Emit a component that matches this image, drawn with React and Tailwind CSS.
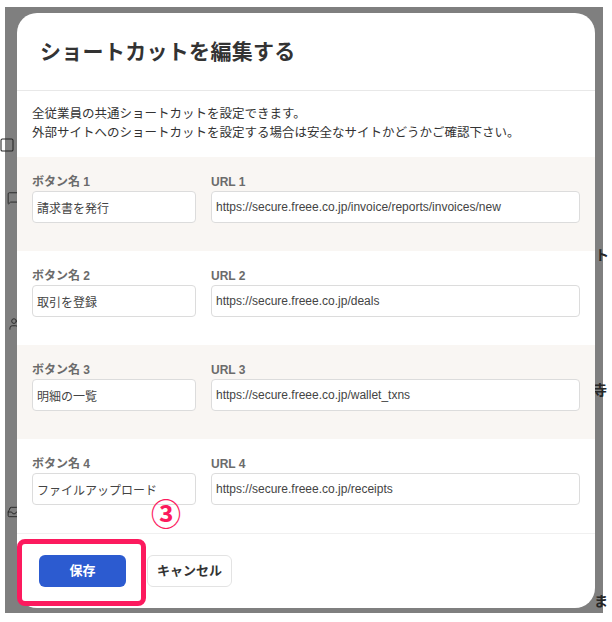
import { Square, MessageSquare, User, Inbox } from "lucide-react";

const shortcuts = [
  { name: "請求書を発行", url: "https://secure.freee.co.jp/invoice/reports/invoices/new" },
  { name: "取引を登録", url: "https://secure.freee.co.jp/deals" },
  { name: "明細の一覧", url: "https://secure.freee.co.jp/wallet_txns" },
  { name: "ファイルアップロード", url: "https://secure.freee.co.jp/receipts" },
];

function ShortcutRow({ index, item }) {
  const shaded = index % 2 === 0;
  return (
    <div className={`flex gap-[15px] px-[15px] pt-[17px] pb-[28px] ${shaded ? "bg-[#f9f6f3]" : "bg-white"}`}>
      <div className="w-[164px] shrink-0">
        <div className="text-[12px] leading-[16px] font-bold text-[#6b6b6b] mb-[1px]">ボタン名 {index + 1}</div>
        <input
          readOnly
          defaultValue={item.name}
          className="w-full h-[32px] px-[4px] text-[12px] text-[#444444] bg-white border border-[#dcdcdc] rounded-[4px] outline-none"
        />
      </div>
      <div className="flex-1">
        <div className="text-[12px] leading-[16px] font-bold text-[#6b6b6b] mb-[1px]">URL {index + 1}</div>
        <input
          readOnly
          defaultValue={item.url}
          className="w-full h-[32px] px-[4px] text-[12px] text-[#444444] bg-white border border-[#dcdcdc] rounded-[4px] outline-none"
        />
      </div>
    </div>
  );
}

export default function App() {
  return (
    <div className="w-[612px] h-[622px] bg-white relative overflow-hidden pt-[7px] pl-[5px] font-['Liberation_Sans','Noto_Sans_CJK_JP',sans-serif]">
      <div className="relative w-[598px] h-[606px] bg-[#7f7f7f] pl-[12px] pt-[6px] pr-[8px] pb-[5px]">
        {/* page behind the overlay */}
        <div className="absolute left-[-6px] top-[130px] text-[#262626]"><Square size={16} strokeWidth={1.6} /></div>
        <div className="absolute left-[2px] top-[184px] text-[#262626]"><MessageSquare size={14} strokeWidth={1.6} /></div>
        <div className="absolute left-[2px] top-[310px] text-[#262626]"><User size={14} strokeWidth={1.6} /></div>
        <div className="absolute left-[2px] top-[498px] text-[#262626]"><Inbox size={14} strokeWidth={1.6} /></div>
        <span className="absolute left-[590px] top-[238px] text-[14px] font-bold text-[#262626]">ト</span>
        <span className="absolute left-[588px] top-[373px] text-[14px] font-bold text-[#262626]">寺</span>
        <span className="absolute left-[589px] top-[584px] text-[14px] font-bold text-[#262626]">ま</span>

        <div className="relative z-10 h-full bg-white rounded-[20px] overflow-hidden flex flex-col">
          <div className="h-[78px] shrink-0 flex items-center pl-[23px] border-b border-[#e8e8e8]">
            <h1 className="text-[21px] font-bold text-[#333333] tracking-[0.3px]">ショートカットを編集する</h1>
          </div>
          <div className="px-[15px] pt-[14px] pb-[14px] text-[12.5px] leading-[19px] text-[#333333]">
            <p>全従業員の共通ショートカットを設定できます。</p>
            <p>外部サイトへのショートカットを設定する場合は安全なサイトかどうかご確認下さい。</p>
          </div>
          {shortcuts.map((item, i) => (
            <ShortcutRow key={i} index={i} item={item} />
          ))}
          <div className="border-t border-[#f0f0f0] flex gap-[21px] pl-[22px] pt-[21px]">
            <button className="w-[87px] h-[32px] rounded-[6px] bg-[#2c5bd0] text-white text-[13px] font-bold">保存</button>
            <button className="w-[85px] h-[32px] rounded-[6px] bg-white border border-[#e3e3e3] text-[#333333] text-[13px] font-bold">キャンセル</button>
          </div>
        </div>

        {/* annotation */}
        <div className="absolute z-20 left-[12px] top-[532px] w-[129px] h-[67px] border-[5px] border-[#fc1a5e] rounded-[8px]" />
        <span className="absolute z-20 left-[146px] top-[487px] text-[30px] leading-[36px] font-bold text-[#fc1a5e] font-['Noto_Sans_CJK_JP',sans-serif]">③</span>
      </div>
    </div>
  );
}
